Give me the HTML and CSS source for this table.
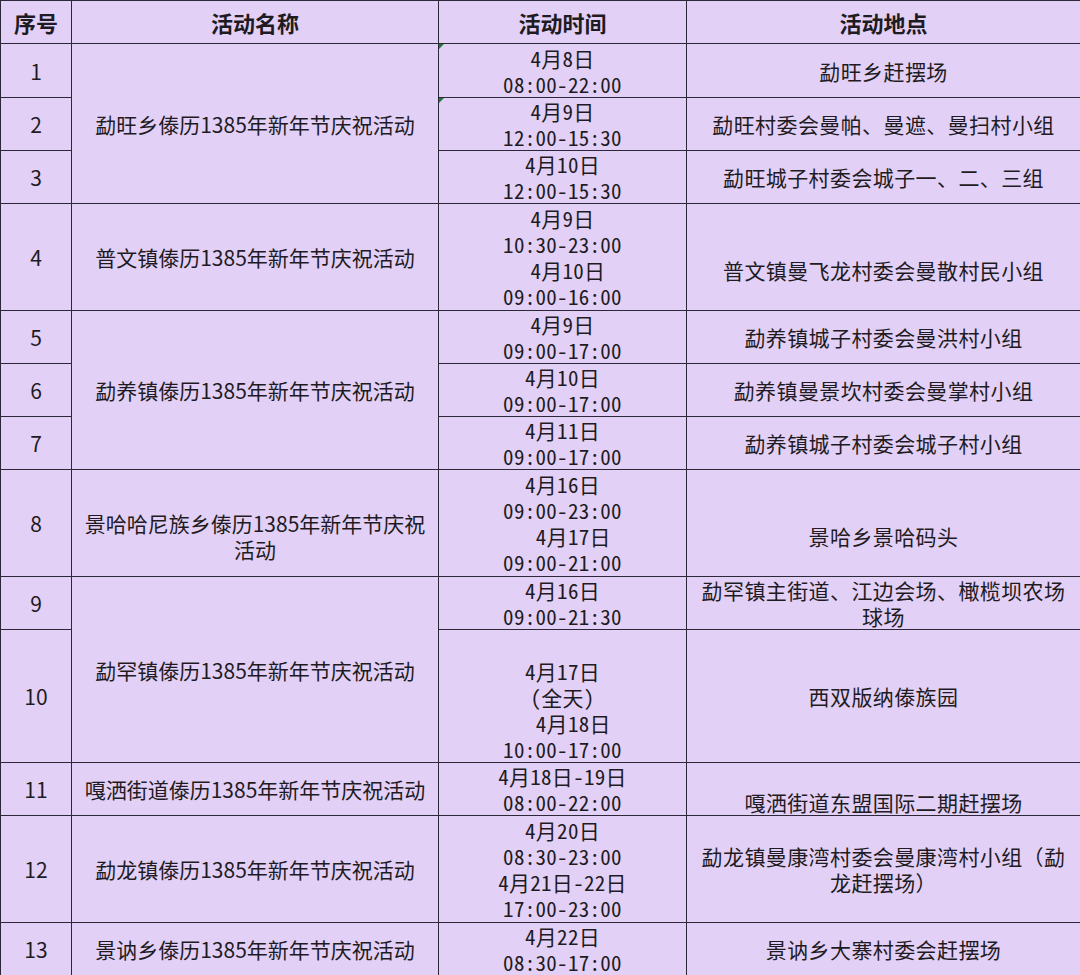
FILE: index.html
```html
<!DOCTYPE html>
<html lang="zh-CN">
<head>
<meta charset="utf-8">
<title>活动表</title>
<link rel="stylesheet" href="styles.css">
</head>
<body>
<table class="sched">
  <colgroup>
    <col class="c1"><col class="c2"><col class="c3"><col class="c4">
  </colgroup>
  <thead>
    <tr class="hd"><th>序号</th><th>活动名称</th><th>活动时间</th><th>活动地点</th></tr>
  </thead>
  <tbody>
    <tr class="r54">
      <td>1</td>
      <td class="nm" rowspan="3">勐旺乡傣历1385年新年节庆祝活动</td>
      <td class="t mark">4月8日<br>08:00-22:00</td>
      <td class="loc">勐旺乡赶摆场</td>
    </tr>
    <tr class="r53">
      <td>2</td>
      <td class="t mark">4月9日<br>12:00-15:30</td>
      <td class="loc">勐旺村委会曼帕、曼遮、曼扫村小组</td>
    </tr>
    <tr class="r53">
      <td>3</td>
      <td class="t">4月10日<br>12:00-15:30</td>
      <td class="loc">勐旺城子村委会城子一、二、三组</td>
    </tr>
    <tr class="r107">
      <td>4</td>
      <td class="nm">普文镇傣历1385年新年节庆祝活动</td>
      <td class="t">4月9日<br>10:30-23:00<br>&nbsp;4月10日<br>09:00-16:00</td>
      <td class="loc dn">普文镇曼飞龙村委会曼散村民小组</td>
    </tr>
    <tr class="r53">
      <td>5</td>
      <td class="nm" rowspan="3">勐养镇傣历1385年新年节庆祝活动</td>
      <td class="t">4月9日<br>09:00-17:00</td>
      <td class="loc">勐养镇城子村委会曼洪村小组</td>
    </tr>
    <tr class="r53">
      <td>6</td>
      <td class="t">4月10日<br>09:00-17:00</td>
      <td class="loc">勐养镇曼景坎村委会曼掌村小组</td>
    </tr>
    <tr class="r53">
      <td>7</td>
      <td class="t">4月11日<br>09:00-17:00</td>
      <td class="loc">勐养镇城子村委会城子村小组</td>
    </tr>
    <tr class="r107">
      <td>8</td>
      <td class="nm dn">景哈哈尼族乡傣历1385年新年节庆祝活动</td>
      <td class="t">4月16日<br>09:00-23:00<br>&nbsp;&nbsp;4月17日<br>09:00-21:00</td>
      <td class="loc dn">景哈乡景哈码头</td>
    </tr>
    <tr class="r53">
      <td>9</td>
      <td class="nm" rowspan="2">勐罕镇傣历1385年新年节庆祝活动</td>
      <td class="t">4月16日<br>09:00-21:30</td>
      <td class="loc">勐罕镇主街道、江边会场、橄榄坝农场球场</td>
    </tr>
    <tr class="r133">
      <td>10</td>
      <td class="t bot">4月17日<br>（全天）<br>&nbsp;&nbsp;4月18日<br>10:00-17:00</td>
      <td class="loc">西双版纳傣族园</td>
    </tr>
    <tr class="r53">
      <td>11</td>
      <td class="nm">嘎洒街道傣历1385年新年节庆祝活动</td>
      <td class="t">4月18日-19日<br>08:00-22:00</td>
      <td class="loc dn">嘎洒街道东盟国际二期赶摆场</td>
    </tr>
    <tr class="r107">
      <td>12</td>
      <td class="nm">勐龙镇傣历1385年新年节庆祝活动</td>
      <td class="t">4月20日<br>08:30-23:00<br>4月21日-22日<br>17:00-23:00</td>
      <td class="loc">勐龙镇曼康湾村委会曼康湾村小组（勐龙赶摆场）</td>
    </tr>
    <tr class="r53">
      <td>13</td>
      <td class="nm">景讷乡傣历1385年新年节庆祝活动</td>
      <td class="t">4月22日<br>08:30-17:00</td>
      <td class="loc">景讷乡大寨村委会赶摆场</td>
    </tr>
  </tbody>
</table>
</body>
</html>
```

FILE: styles.css
```css
html, body {
  margin: 0;
  padding: 0;
  background: #e3d0f7;
}

.sched {
  width: 1080px;
  border-collapse: collapse;
  table-layout: fixed;
  background: #e3d0f7;
  color: #1e1b22;
  font-family: "Noto Sans CJK SC", "Noto Sans", sans-serif;
  font-size: 21px;
  line-height: 26px;
}

.c1 { width: 71px; }
.c2 { width: 367px; }
.c3 { width: 248px; }
.c4 { width: 394px; }

.sched th,
.sched td {
  border: 1px solid #2c2838;
  padding: 0;
  text-align: center;
  vertical-align: middle;
}

.sched th {
  font-weight: 700;
  font-size: 22px;
}

.hd { height: 43px; }
.r54 { height: 54px; }
.r53 { height: 53px; }
.r107 { height: 107px; }
.r133 { height: 133px; }

.sched td.nm {
  padding-left: 10px;
  padding-right: 10px;
}

.sched td.loc {
  padding-left: 14px;
  padding-right: 14px;
  letter-spacing: 0.4px;
}

.t {
  font-feature-settings: "hwid" 1;
  letter-spacing: 0.3px;
}

.sched td.bot { vertical-align: bottom; }

.sched td.dn { padding-top: 26px; }

.mark { position: relative; }
.mark::before {
  content: "";
  position: absolute;
  left: 0;
  top: 0;
  width: 0;
  height: 0;
  border-top: 5px solid #1f7a3a;
  border-right: 5px solid transparent;
}
```
